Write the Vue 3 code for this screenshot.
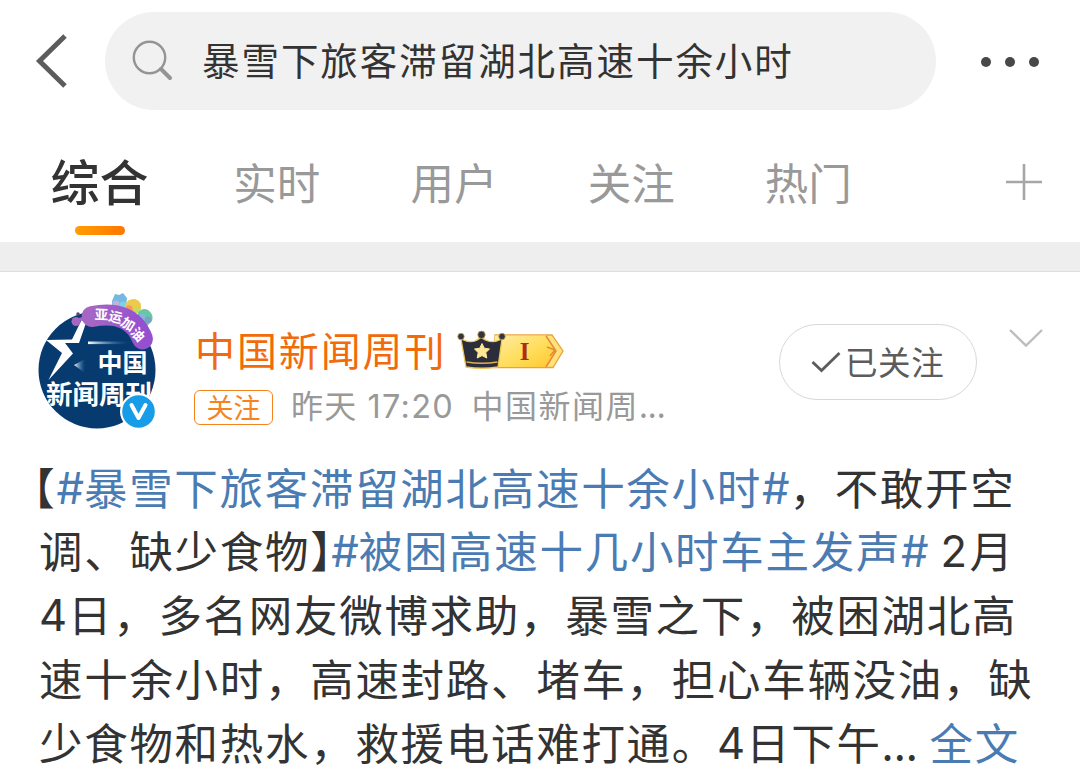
<template>
  <div class="page">
    <header class="topbar">
      <svg class="back" width="34" height="56" viewBox="0 0 34 56">
        <path d="M30 3 L4.500 28 L30 53" fill="none" stroke="#5c5c5c" stroke-width="5" />
      </svg>
      <div class="search">
        <svg class="search-icon" width="42" height="42" viewBox="0 0 42 42">
          <circle cx="17.500" cy="17.500" r="15.700" fill="none" stroke="#949494" stroke-width="2.400" />
          <path d="M29 29 L38 38" stroke="#949494" stroke-width="4" stroke-linecap="round" />
        </svg>
        <span class="keyword">{{ keyword }}</span>
      </div>
      <div class="more"><i></i><i></i><i></i></div>
    </header>

    <nav class="tabs">
      <div
        v-for="(tab, index) in tabs"
        :key="tab"
        class="tab"
        :class="{ active: index === current }"
        @click="current = index"
      >
        <span>{{ tab }}</span>
      </div>
      <svg class="plus" width="38" height="38" viewBox="0 0 38 38">
        <path d="M1 19 H37 M19 1 V37" stroke="#a6a6a6" stroke-width="2.600" />
      </svg>
    </nav>

    <div class="gap"></div>

    <article class="post">
      <div class="author">
        <svg class="avatar" width="124" height="144" viewBox="0 0 124 144">
          <defs>
            <linearGradient id="beam" x1="0" x2="1">
              <stop offset="0" stop-color="#fff" />
              <stop offset="1" stop-color="#3f80b8" stop-opacity="0" />
            </linearGradient>
            <linearGradient id="ribbon" x1="0" x2="1">
              <stop offset="0" stop-color="#a566c4" />
              <stop offset="1" stop-color="#9450cf" />
            </linearGradient>
            <clipPath id="round"><circle cx="61" cy="78" r="58.500" /></clipPath>
          </defs>
          <circle cx="61" cy="78" r="58.500" fill="#073b70" />
          <g clip-path="url(#round)">
            <path d="M10 48 L36 47.500 L45.500 28 L50 31 L43 51 H29 L37 61.500 L12.500 88 L26 61 Z" fill="#fff" />
            <rect x="52" y="49.500" width="40" height="2.600" fill="url(#beam)" />
            <path d="M38 73 L49 67 V81 Z" fill="url(#beam)" />
            <text x="61.500" y="79.500" class="logo" font-size="25">中国</text>
            <text x="10" y="112" class="logo" font-size="26.500">新闻周刊</text>
          </g>
          <!-- mascots sitting on the ribbon -->
          <g>
            <path d="M76 9 L79 2 L83 3 L87 1 L91 6 L90 14 L82 18 L76 15 Z" fill="#74b9e2" />
            <circle cx="80" cy="12" r="3.500" fill="#c4b2d6" />
            <circle cx="87" cy="13" r="3.500" fill="#7fd0e6" />
            <path d="M89 13 Q92 6 99 7 Q106 9 105 17 L99 22 L89 19 Z" fill="#edc94c" />
            <circle cx="93" cy="17" r="3.800" fill="#f19b61" />
            <circle cx="101" cy="18" r="3.500" fill="#c5d95a" />
            <path d="M102 21 Q106 15 112 18 Q118 22 116 29 L111 34 L102 28 Z" fill="#66c6a6" />
            <circle cx="106" cy="25" r="3.200" fill="#8ab4dc" />
            <circle cx="112" cy="28" r="3.200" fill="#7c9fc4" />
          </g>
          <circle cx="40" cy="29.500" r="4.500" fill="#a566c4" />
          <circle cx="42" cy="22" r="1.800" fill="#554b70" />
          <path d="M56 24.500 Q95 17 106.500 47" fill="none" stroke="url(#ribbon)" stroke-width="21" stroke-linecap="round" />
          <path d="M43 27.500 L54 25" stroke="#a566c4" stroke-width="3" />
          <g class="cheer">
            <text y="5" transform="translate(65.500 22.500) rotate(2)">亚</text>
            <text y="5" transform="translate(79.500 25) rotate(14)">运</text>
            <text y="5" transform="translate(92 32) rotate(32)">加</text>
            <text y="5" transform="translate(102 42.500) rotate(48)">油</text>
          </g>
          <circle cx="102.500" cy="119.500" r="18.500" fill="#fff" />
          <circle cx="102.500" cy="119.500" r="16.300" fill="#179de8" />
          <path d="M95.500 113 L102.500 126 L109.500 113" fill="none" stroke="#fff" stroke-width="4" stroke-linecap="round" stroke-linejoin="round" />
        </svg>

        <div class="info">
          <div class="name-row">
            <span class="name">中国新闻周刊</span>
            <svg class="badge" width="108" height="40" viewBox="0 0 108 40">
              <defs>
                <linearGradient id="gold" x1="0" x2="1" y1="0" y2="1">
                  <stop offset="0" stop-color="#ffeda0" />
                  <stop offset="0.600" stop-color="#ffdb55" />
                  <stop offset="1" stop-color="#ffc52f" />
                </linearGradient>
              </defs>
              <path d="M38 5 H95 L106 21 L96 37.500 H38 Z" fill="#ffe37a" stroke="#e9a33c" stroke-width="1.300" />
              <path d="M38 5.500 H89 L99 21 L89 37 H38 Z" fill="url(#gold)" />
              <path d="M89 6 L99 21 L89 37 M90 17 L98 20 L93 26" fill="none" stroke="#e5893a" stroke-width="1.500" />
              <path d="M4 9 Q12 13 18 11 Q23 9 24 6 Q25 9 31 11 Q37 13 45 9 L41 37 Q25 39.500 9 37 Z" fill="#2b2e3a" stroke="#efc657" stroke-width="1.300" />
              <path d="M9.500 32 Q25 34.500 40.500 32" fill="none" stroke="#d8af53" stroke-width="1.500" />
              <circle cx="4" cy="6.500" r="3.200" fill="#34343a" stroke="#bca05b" stroke-width="0.800" />
              <circle cx="24.500" cy="4.800" r="3.700" fill="#34343a" stroke="#bca05b" stroke-width="0.800" />
              <circle cx="45" cy="6.500" r="3.200" fill="#34343a" stroke="#bca05b" stroke-width="0.800" />
              <path d="M25 13.500 L27.300 18.200 L32.500 19 L28.800 22.600 L29.800 28 L25 25.600 L20.200 28 L21.200 22.600 L17.500 19 L22.700 18.200 Z" fill="#ffe793" stroke="#ffe793" stroke-width="1" stroke-linejoin="round" />
              <text x="67.500" y="29.500" class="level">I</text>
            </svg>
          </div>
          <div class="meta">
            <span class="tag">关注</span>
            <span class="time">昨天</span>
            <span class="clock">17:20</span>
            <span class="from">中国新闻周<i>...</i></span>
          </div>
        </div>

        <button class="follow" type="button">
          <svg width="30" height="22" viewBox="0 0 30 22">
            <path d="M1.500 11 L10.500 19.500 L28.500 2" fill="none" stroke="#5c5c5c" stroke-width="2.800" />
          </svg>
          <span>已关注</span>
        </button>
        <svg class="arrow" width="36" height="20" viewBox="0 0 36 20">
          <path d="M2 2 L18 17.500 L34 2" fill="none" stroke="#bdbdbd" stroke-width="2.400" />
        </svg>
      </div>

      <div class="content">
        <p v-for="(line, i) in lines" :key="i" class="line">
          <span v-for="(part, j) in line" :key="j" :class="part.type">{{ part.text }}</span>
        </p>
      </div>
    </article>
  </div>
</template>

<script setup>
import { ref } from 'vue';

const keyword = ref('暴雪下旅客滞留湖北高速十余小时');
const tabs = ['综合', '实时', '用户', '关注', '热门'];
const current = ref(0);

const lines = [
  [
    { text: '【', type: 'open' },
    { text: '#', type: 'link hash' },
    { text: '暴雪下旅客滞留湖北高速十余小时', type: 'link' },
    { text: '#', type: 'link hash' },
    { text: ',不敢开空' },
  ],
  [
    { text: '调、缺少食物' },
    { text: '】', type: 'close' },
    { text: '#', type: 'link hash' },
    { text: '被困高速十几小时车主发声', type: 'link' },
    { text: '#', type: 'link hash' },
    { text: '2', type: 'num spaced' },
    { text: '月' },
  ],
  [
    { text: '4', type: 'num' },
    { text: '日,多名网友微博求助,暴雪之下,被困湖北高' },
  ],
  [{ text: '速十余小时,高速封路、堵车,担心车辆没油,缺' }],
  [
    { text: '少食物和热水,救援电话难打通。' },
    { text: '4', type: 'num' },
    { text: '日下午' },
    { text: '...', type: 'dots' },
    { text: '全文', type: 'link' },
  ],
].map((line) => line.map((part) => ({ ...part, text: part.text.replace(/,/g, '\uff0c') })));
</script>

<style>
body {
  background: #fff;
  overflow: hidden;
}
</style>

<style scoped>
.page {
  width: 1080px;
  height: 770px;
  overflow: hidden;
  background: #fff;
  color: #333;
  font-family: "Noto Sans CJK SC", sans-serif;
}

svg {
  display: block;
  flex: none;
}

.topbar {
  display: flex;
  align-items: center;
  height: 98px;
  padding: 12px 41px 0 35px;
}

.search {
  display: flex;
  align-items: center;
  box-sizing: border-box;
  width: 831px;
  height: 98px;
  margin-left: 36px;
  padding-left: 27px;
  border-radius: 49px;
  background: #f1f1f1;
}

.keyword {
  margin: -5px 0 0 28px;
  font-size: 37.5px;
  line-height: 50px;
  letter-spacing: 1.95px;
  white-space: nowrap;
}

.more {
  display: flex;
  justify-content: space-between;
  width: 58px;
  margin-left: auto;
  margin-top: 2px;
}

.more i {
  width: 10px;
  height: 10px;
  border-radius: 50%;
  background: #484848;
}

.tabs {
  display: flex;
  height: 132px;
  padding-left: 11px;
}

.tab {
  display: flex;
  flex-direction: column;
  align-items: center;
  width: 177.2px;
  padding-top: 42px;
  box-sizing: border-box;
  color: #999;
  font-size: 43.5px;
  line-height: 60px;
  white-space: nowrap;
}

.tab.active {
  padding-top: 40px;
  color: #333;
  font-size: 49px;
  font-weight: 500;
}

.tab.active::after {
  content: "";
  width: 50px;
  height: 9px;
  margin-top: 16px;
  border-radius: 5px;
  background: linear-gradient(90deg, #ff9e00, #ff7700);
}

.plus {
  margin: 53px 0 0 108px;
}

.gap {
  height: 29px;
  background: #eee;
  border-bottom: 1px solid #dfdfdf;
}

.author {
  display: flex;
  height: 144px;
  padding: 20px 0 0 36px;
}

.info {
  width: 584px;
  margin-left: 35px;
}

.name-row {
  display: flex;
  height: 62px;
  padding-top: 27px;
}

.name {
  color: #f26b0a;
  font-size: 40px;
  line-height: 60px;
  letter-spacing: 1.9px;
}

.badge {
  margin: 11px 0 0 11px;
}

.meta {
  display: flex;
  align-items: center;
  height: 40px;
  margin-top: 4px;
  color: #999;
  font-size: 32px;
  line-height: 40px;
  letter-spacing: 1.2px;
  white-space: nowrap;
}

.tag {
  box-sizing: border-box;
  width: 79px;
  height: 35px;
  margin: 4px 0 0 -1px;
  border: 1.5px solid #f5841f;
  border-radius: 6px;
  color: #f5841f;
  font-size: 27px;
  line-height: 32px;
  letter-spacing: 0;
  text-align: center;
}

.time {
  margin: -2px 0 0 18px;
}

.clock {
  width: 86px;
  margin: 3px 0 0 10px;
  font-family: Inter, sans-serif;
  font-size: 32.5px;
  letter-spacing: 1.3px;
}

.from {
  margin: -2px 0 0 18px;
  letter-spacing: 1.5px;
}

.from i {
  font-style: normal;
  letter-spacing: 0;
}

.follow {
  display: flex;
  align-items: center;
  box-sizing: border-box;
  width: 198px;
  height: 76px;
  margin-top: 32px;
  padding: 0 0 0 31px;
  border: 1.5px solid #d8d8d8;
  border-radius: 38px;
  background: #fff;
  color: #5c5c5c;
  font-family: inherit;
  font-size: 32.5px;
  letter-spacing: 0.6px;
  white-space: nowrap;
}

.follow span {
  margin: -4px 0 0 4px;
}

.arrow {
  margin: 36px 0 0 31px;
}

.content {
  display: flex;
  flex-direction: column;
  gap: 8.8px;
  padding: 22.5px 0 0 39px;
}

.line {
  display: flex;
  height: 55px;
  margin: 0;
  font-size: 43.5px;
  line-height: 55px;
  letter-spacing: 1.7px;
  white-space: nowrap;
}

.link {
  color: #4a7cb3;
}

.open {
  margin-left: -6px;
  font-feature-settings: "halt";
}

.close {
  width: 21px;
  font-feature-settings: "halt";
  letter-spacing: 0;
}

.hash {
  width: 27.5px;
  padding-top: 2px;
  font-family: Inter, sans-serif;
  letter-spacing: 0;
}

.num {
  width: 29px;
  padding-top: 2px;
  font-family: Inter, sans-serif;
  letter-spacing: 0;
}

.spaced {
  margin-left: 12px;
}

.dots {
  width: 48px;
  letter-spacing: 0;
}

.logo {
  fill: #fff;
  font-weight: 700;
}

.cheer {
  fill: #fff;
  font-size: 13.5px;
  font-weight: 700;
  text-anchor: middle;
}

.level {
  fill: #ac2e13;
  font-family: "Liberation Serif", serif;
  font-size: 25px;
  font-weight: 700;
  text-anchor: middle;
}
</style>
